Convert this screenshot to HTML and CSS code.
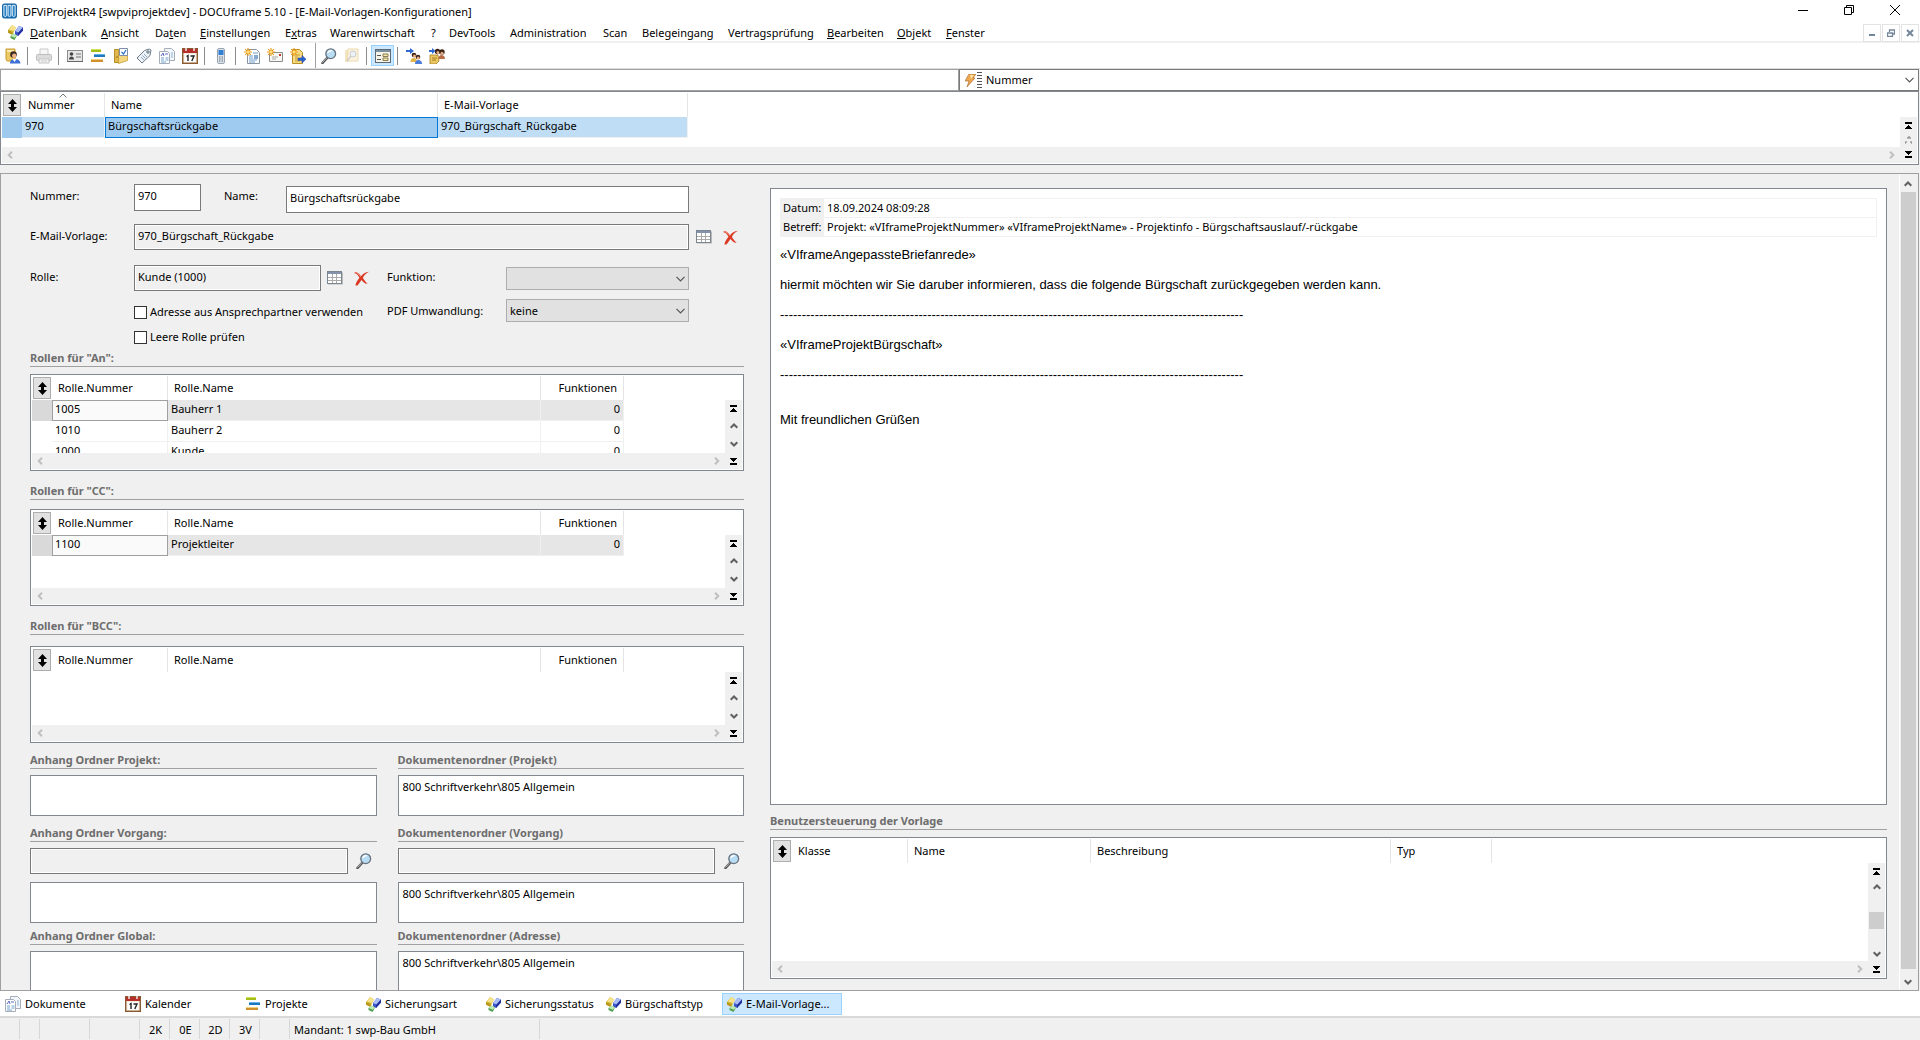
FILE: index.html
```html
<!DOCTYPE html>
<html lang="de">
<head>
<meta charset="utf-8">
<title>DFViProjektR4 - DOCUframe 5.10</title>
<link rel="stylesheet" href="styles.css">
</head>
<body>
<svg class="sprite" aria-hidden="true">
  <symbol id="i-app" viewBox="0 0 16 16"><rect x=".5" y=".5" width="15" height="15" rx="2" fill="#1b75bb" stroke="#0f5c9c"/><path d="M2 2h3v11l-1.500 1L2 13zM6.500 2h3v11L8 14l-1.500-1zM11 2h3v11l-1.500 1L11 13z" fill="#2b84c6" stroke="#fff" stroke-width=".9"/></symbol>
  <symbol id="i-cubes" viewBox="0 0 16 16"><path d="M5 1l4 2.500-3.500 7L1 8.500V6z" fill="#d9bd3a"/><path d="M5 1l4 2.500L7 7 2 5.500z" fill="#f6e48c"/><path d="M1 6l4.500 2v3L1 8.700z" fill="#b8971b"/><path d="M12 2l4 1.500v3l-5 5.500-3-1.500V7z" fill="#3c55c8"/><path d="M12 2l4 1.500-4.500 5L8 7z" fill="#a9bdf6"/><path d="M16 3.500v3L11 12V9z" fill="#22309c"/><path d="M6.500 9.500l3.500 2-2.500 4.500L3.500 14v-2z" fill="#4fa04d"/><path d="M6.500 9.500l3.500 2-2.300 2.300L3.500 12z" fill="#bfe8b4"/></symbol>
  <symbol id="i-login" viewBox="0 0 16 16"><path d="M1 1h9v12H2L1 11z" fill="#ecc963" stroke="#c79a2d"/><path d="M2 2h7v2H2z" fill="#fae9b0"/><circle cx="8.500" cy="6.500" r="3.300" fill="#3a2a22"/><ellipse cx="9.200" cy="7.800" rx="2.100" ry="2.400" fill="#efb48a"/><path d="M5 15.500c0-4 3-5 5.500-4.500 3 0 4.500 1.500 5 4.500z" fill="#3d6fd6"/><path d="M7.500 11l2 3 2-3z" fill="#fff"/></symbol>
  <symbol id="i-print" viewBox="0 0 16 16"><path d="M4 1h8v6H4z" fill="#f7f7f7" stroke="#c9c9c9"/><rect x=".5" y="6.500" width="15" height="6" rx="1" fill="#dcdcdc" stroke="#bcbcbc"/><path d="M3 11h10v4H3z" fill="#f4f4f4" stroke="#c4c4c4"/><path d="M5 13h6" stroke="#ccc"/></symbol>
  <symbol id="i-card" viewBox="0 0 16 16"><rect x=".5" y="2.500" width="15" height="11" fill="#e6e6e6" stroke="#8c8c8c"/><path d="M0 13.500h16" stroke="#666"/><circle cx="4.500" cy="6" r="1.800" fill="#444"/><path d="M2 11.500c0-4 5-4 5 0z" fill="#444"/><path d="M9 6h5M9 9h5" stroke="#777"/></symbol>
  <symbol id="i-bars" viewBox="0 0 16 16"><path d="M1 1h9l1 1v2H1z" fill="#a4bd17"/><path d="M1 1h9l1 1H1z" fill="#cfe05c"/><path d="M4 6h10l1 1v2H4z" fill="#1f78bd"/><path d="M4 6h10l1 1H4z" fill="#61b0e8"/><path d="M1 11h11l1 1v2H1z" fill="#cf8f2a"/><path d="M1 11h11l1 1H1z" fill="#f5d07c"/></symbol>
  <symbol id="i-folder" viewBox="0 0 16 16"><path d="M1.500 1.500h4v13h-4z" fill="#e2b94f" stroke="#b98b23"/><path d="M5.500 2.500h9v10l-9 3z" fill="#f3d67e" stroke="#c59a34" stroke-width=".8"/><path d="M6.500.5h8v7h-8z" fill="#f8fbff" stroke="#7d8ea6"/><path d="M8.500 4l2 2 2.500-4" fill="none" stroke="#2f6fc4" stroke-width="1.200"/><circle cx="4" cy="9" r=".8" fill="#8b671a"/></symbol>
  <symbol id="i-tag" viewBox="0 0 16 16"><path d="M8.500 2.500l5-1.500 1.500 1-1 5.500-8 7.500-5-5z" fill="#eef3f7" stroke="#6c7c8c"/><circle cx="12" cy="4" r="1.200" fill="#fff" stroke="#55646f"/><path d="M5 9l3 3M6.500 7.500l3 3M8 6l3 3" stroke="#8da6bb"/></symbol>
  <symbol id="i-docs" viewBox="0 0 16 16"><path d="M5.500.5h7l3 3v9h-10z" fill="#f3f6fa" stroke="#a5adb8"/><path d="M.5 3.500h8l2 2v10H.5z" fill="#fff" stroke="#a5adb8"/><path d="M2 8l2-3 1 3M6 6h3" fill="none" stroke="#5a68c4"/><path d="M2 10h3M6.500 10h3M2 12h3M6.500 12h3M2 14h5" stroke="#6aa0cf"/><path d="M12 5h2M12 7h2M12 9h2" stroke="#8db2d6"/></symbol>
  <symbol id="i-cal" viewBox="0 0 16 16"><rect x=".7" y=".7" width="14.600" height="14.600" fill="#f6ead8" stroke="#8a5b33" stroke-width="1.400"/><path d="M1 1h14v4H1z" fill="#b6302b"/><path d="M4 0v3M12 0v3" stroke="#eee" stroke-width="1.500"/><rect x="2.500" y="6" width="11" height="8" fill="#fff"/><path d="M4.500 8.500L6 7.500V13M8.500 8h3.500L9.800 13" fill="none" stroke="#222" stroke-width="1.400"/></symbol>
  <symbol id="i-phone" viewBox="0 0 16 16"><rect x="4.500" y=".5" width="7" height="15" rx="1.500" fill="#dde3e9" stroke="#98a4b1"/><rect x="5.500" y="2" width="5" height="5" fill="#2f7fd3"/><path d="M6 9h1m.500 0h1m.500 0h1M6 11h1m.500 0h1m.500 0h1M6 13h1m.500 0h1m.500 0h1" stroke="#6d7885"/></symbol>
  <symbol id="i-star" viewBox="0 0 8 8"><path d="M4 0v8M0 4h8M1.200 1.200l5.600 5.600M6.800 1.200L1.200 6.800" stroke="#e79a1c" stroke-width="1.100"/><circle cx="4" cy="4" r="1.500" fill="#ffe27a"/></symbol>
  <symbol id="i-newdoc" viewBox="0 0 16 16"><path d="M3.500 1.500h9l3 3v11h-12z" fill="#fff" stroke="#8a93a0"/><path d="M9 5h5M5 8h4M5 10h4M5 12h8M5 14h6" stroke="#6c9cc9"/><rect x="10" y="7" width="4" height="4" fill="#86a9d2"/><use href="#i-star" width="8" height="8"/></symbol>
  <symbol id="i-newmail" viewBox="0 0 16 16"><path d="M2.500 4.500h13v9h-13z" fill="#f7f7f4" stroke="#8b8b8b"/><path d="M5 9h6M5 11h4" stroke="#a7a7a7"/><rect x="12" y="6" width="2" height="2" fill="#c8332c"/><use href="#i-star" width="8" height="8"/></symbol>
  <symbol id="i-newimport" viewBox="0 0 16 16"><path d="M2.500 1.500h7l3 3v11h-10z" fill="#f7dc86" stroke="#bb8e25"/><path d="M5 7h5M5 9h3M5 11h3M5 13h5" stroke="#c59a34"/><path d="M8 10h4V7.500l4 3.700-4 3.800v-2.500H8z" fill="#2b62cf" stroke="#163f96" stroke-width=".5"/><use href="#i-star" width="8" height="8"/></symbol>
  <symbol id="i-search" viewBox="0 0 16 16"><path d="M6.500 9.500L1.500 15" stroke="#555" stroke-width="2.600" stroke-linecap="round"/><path d="M6 9.500L1.500 14.500" stroke="#c5c5c5" stroke-width=".9"/><circle cx="9.700" cy="5.700" r="4.900" fill="#b9dcf5" stroke="#66727e" stroke-width="1.300"/><path d="M6.800 5a3.200 3.200 0 0 1 4-2.200" fill="none" stroke="#fff" stroke-width="1.500"/></symbol>
  <symbol id="i-find" viewBox="0 0 16 16"><path d="M1 2h4v12H1z" fill="#f5e6c2"/><path d="M4 1h10v12H3z" fill="#fbf3df" stroke="#ead9b0"/><circle cx="9" cy="6" r="3" fill="#eaf2f8" stroke="#ccc"/><path d="M7 8l-4 5" stroke="#ccc" stroke-width="1.500"/></symbol>
  <symbol id="i-form" viewBox="0 0 16 14"><rect x=".5" y=".5" width="15" height="13" fill="#f7f4ea" stroke="#5d6a76"/><path d="M1 1h14v2H1z" fill="#7c8fa1"/><path d="M2 6.500h4M2 10.500h4" stroke="#555"/><path d="M8 5h5v2.500H8zM8 9h5v2.500H8z" fill="#f4e9a8" stroke="#716238" stroke-width=".8"/></symbol>
  <symbol id="i-users" viewBox="0 0 16 16"><circle cx="8" cy="7" r="2.300" fill="#3b2416"/><circle cx="8.500" cy="8" r="1.500" fill="#eab088"/><path d="M4.500 14c0-3.500 2-4 3.500-4s3 1 3 4z" fill="#e1b647"/><circle cx="12" cy="9" r="2.300" fill="#3b2416"/><circle cx="12.200" cy="10" r="1.500" fill="#eab088"/><path d="M9 16c0-3 1.500-4 3.500-4s3.500 1 3.500 4z" fill="#4a7ddb"/><path d="M0 2h4V0l4 3-4 3V4H0z" fill="#2f6ad4"/></symbol>
  <symbol id="i-usersdoc" viewBox="0 0 16 16"><path d="M1 7h8l1 6-3 3H1z" fill="#e9c765" stroke="#a97d20" stroke-width=".8"/><path d="M3 10h5M3 12h4" stroke="#a97d20"/><circle cx="8.500" cy="3.500" r="2.700" fill="#3b2416"/><circle cx="9" cy="4.600" r="1.500" fill="#eab088"/><circle cx="13" cy="4" r="2.700" fill="#3b2416"/><circle cx="13" cy="5.200" r="1.500" fill="#eab088"/><path d="M9.500 11c0-3 1.500-4 3-4s3.500 1 3.500 4z" fill="#b86c48"/><path d="M0 2h3V0l3.500 3L3 6V4H0z" fill="#2f6ad4"/></symbol>
  <symbol id="i-flash" viewBox="0 0 11 13"><path d="M4 0h7L8 4h2L2 13l2-6H0z" fill="#f0a850" stroke="#a3662b" stroke-width=".6"/><path d="M5 1h4L6 5z" fill="#fde3a8"/></symbol>
  <symbol id="i-grid" viewBox="0 0 16 14"><rect x="1" y="1.500" width="15" height="12" fill="#b9b9b9"/><rect x=".5" y=".5" width="14" height="12" fill="#fff" stroke="#7a8790"/><path d="M1 1h13v2H1z" fill="#8493ab"/><path d="M1 6.500h13M1 9.500h13M5.500 3v9M9.500 3v9" stroke="#aaa"/></symbol>
  <symbol id="i-del" viewBox="0 0 16 16"><path d="M1 1c3 0 4.500 2 6.500 4.500C9.500 3 12 1 16 .8 12 3 10.500 5 9.500 7.500c1.500 2 2.500 4 5 6-3 .2-5-2-6.500-4C6.500 11.500 5 14 3.500 15.500H1.500C2 12 4 9.500 5.800 7.200 4.500 5 3 3 .5 2.500z" fill="#dc3a24"/><path d="M1.500 1.500c2.500.5 4 2.500 5.500 4.500" fill="none" stroke="#f29a88"/></symbol>
  <symbol id="i-sort" viewBox="0 0 9 13"><path d="M4.500 0L9 5H6v3h3l-4.500 5L0 8h3V5H0z" fill="#000"/></symbol>
  <symbol id="i-first" viewBox="0 0 7 7"><path d="M0 0h7v2H0zM3 3h1v1h1v1h1v1h1v1H0V6h1V5h1V4h1z" fill="#000"/></symbol>
  <symbol id="i-last" viewBox="0 0 7 7"><path d="M0 5h7v2H0zM0 0h7v1H6v1H5v1H4v1H3V3H2V2H1V1H0z" fill="#000"/></symbol>
  <symbol id="i-up" viewBox="0 0 8 6"><path d="M.7 4.800L4 1.500l3.300 3.300" fill="none" stroke="#606060" stroke-width="2"/></symbol>
  <symbol id="i-down" viewBox="0 0 8 6"><path d="M.7 1.200L4 4.500l3.300-3.300" fill="none" stroke="#606060" stroke-width="2"/></symbol>
  <symbol id="i-left" viewBox="0 0 6 8"><path d="M5 .7L1.700 4 5 7.300" fill="none" stroke="#bfbfbf" stroke-width="2"/></symbol>
  <symbol id="i-right" viewBox="0 0 6 8"><path d="M1 .7L4.300 4 1 7.300" fill="none" stroke="#bfbfbf" stroke-width="2"/></symbol>
  <symbol id="i-chev" viewBox="0 0 9 6"><path d="M.5 .8l4 4 4-4" fill="none" stroke="#555" stroke-width="1.200"/></symbol>
</svg>

<div class="app">
  <header class="titlebar">
    <svg class="ic"><use href="#i-app"/></svg>
    <h1 class="title">DFViProjektR4 [swpviprojektdev] - DOCUframe 5.10 - [E-Mail-Vorlagen-Konfigurationen]</h1>
    <div class="winbtns">
      <button class="winbtn" aria-label="Minimieren"><svg width="10" height="10"><path d="M0 5.500h10" stroke="#000"/></svg></button>
      <button class="winbtn" aria-label="Wiederherstellen"><svg width="10" height="10"><path d="M.5 2.500h7v7h-7zM2.500 2.500v-2h7v7h-2" fill="none" stroke="#000"/></svg></button>
      <button class="winbtn" aria-label="Schließen"><svg width="10" height="10"><path d="M0 0l10 10M10 0L0 10" stroke="#000"/></svg></button>
    </div>
  </header>

  <nav class="menubar">
    <svg class="ic"><use href="#i-cubes"/></svg>
    <div class="menu">
      <button class="mi w71"><u>D</u>atenbank</button><button class="mi w54"><u>A</u>nsicht</button><button class="mi w45">Da<u>t</u>en</button><button class="mi w85"><u>E</u>instellungen</button><button class="mi w45">E<u>x</u>tras</button><button class="mi w101">Warenwirtschaft</button><button class="mi w18">?</button><button class="mi w61">DevTools</button><button class="mi w93">Administration</button><button class="mi w39">Scan</button><button class="mi w86">Belegeingang</button><button class="mi w99">Vertragsprüfung</button><button class="mi w70"><u>B</u>earbeiten</button><button class="mi w49"><u>O</u>bjekt</button><button class="mi"><u>F</u>enster</button>
    </div>
    <div class="mdi">
      <button class="mdibtn" aria-label="Minimieren"><svg width="8" height="8"><path d="M1 6h6" stroke="#74869a" stroke-width="2"/></svg></button>
      <button class="mdibtn" aria-label="Wiederherstellen"><svg width="8" height="8"><path d="M.5 4h5v3.500h-5zM2.500 3V1h5v4H6" fill="none" stroke="#74869a" stroke-width="1.300"/></svg></button>
      <button class="mdibtn" aria-label="Schließen"><svg width="8" height="8"><path d="M1 1l6 6M7 1L1 7" stroke="#74869a" stroke-width="2"/></svg></button>
    </div>
  </nav>

  <div class="toolbar">
    <button class="tb" aria-label="Anmelden"><svg class="ic"><use href="#i-login"/></svg></button><i class="sep"></i>
    <button class="tb" aria-label="Drucken"><svg class="ic"><use href="#i-print"/></svg></button><i class="sep"></i>
    <button class="tb" aria-label="Adressen"><svg class="ic"><use href="#i-card"/></svg></button>
    <button class="tb" aria-label="Projekte"><svg class="ic"><use href="#i-bars"/></svg></button>
    <button class="tb" aria-label="Vorgänge"><svg class="ic"><use href="#i-folder"/></svg></button>
    <button class="tb" aria-label="Artikel"><svg class="ic"><use href="#i-tag"/></svg></button>
    <button class="tb" aria-label="Dokumente"><svg class="ic"><use href="#i-docs"/></svg></button>
    <button class="tb" aria-label="Kalender"><svg class="ic"><use href="#i-cal"/></svg></button><i class="sep"></i>
    <button class="tb" aria-label="Telefon"><svg class="ic"><use href="#i-phone"/></svg></button><i class="sep"></i>
    <button class="tb" aria-label="Neues Dokument"><svg class="ic"><use href="#i-newdoc"/></svg></button>
    <button class="tb" aria-label="Neue E-Mail"><svg class="ic"><use href="#i-newmail"/></svg></button>
    <button class="tb" aria-label="Import"><svg class="ic"><use href="#i-newimport"/></svg></button><i class="sep sep-full"></i>
    <button class="tb" aria-label="Suchen"><svg class="ic"><use href="#i-search"/></svg></button>
    <button class="tb" aria-label="Ordner durchsuchen"><svg class="ic"><use href="#i-find"/></svg></button><i class="sep"></i>
    <button class="tb tb-on" aria-label="Formularansicht"><svg class="gridic"><use href="#i-form"/></svg></button><i class="sep"></i>
    <button class="tb" aria-label="Benutzer zuweisen"><svg class="ic"><use href="#i-users"/></svg></button>
    <button class="tb" aria-label="Gruppen zuweisen"><svg class="ic"><use href="#i-usersdoc"/></svg></button>
  </div>

  <div class="searchrow">
    <input class="search" type="text" aria-label="Suchbegriff">
    <div class="field-pick">
      <svg class="flash"><use href="#i-flash"/></svg><i class="grip"></i>
      <select class="pick" aria-label="Suchfeld"><option>Nummer</option></select>
      <svg class="chev"><use href="#i-chev"/></svg>
    </div>
  </div>

  <section class="list list-main">
    <div class="list-view">
      <table class="tbl tbl-main">
        <colgroup><col class="c-head"><col class="c-mnr"><col class="c-mname"><col class="c-mvorl"></colgroup>
        <thead><tr><th><button class="sortbtn" aria-label="Sortieren"><svg class="sort"><use href="#i-sort"/></svg></button></th><th class="sorted">Nummer<svg class="caret" viewBox="0 0 8 5"><path d="M.5 4.500L4 1l3.500 3.500" fill="none" stroke="#777"/></svg></th><th>Name</th><th>E-Mail-Vorlage</th></tr></thead>
        <tbody><tr class="sel-blue"><td></td><td>970</td><td class="cell-on">Bürgschaftsrückgabe</td><td>970_Bürgschaft_Rückgabe</td></tr></tbody>
      </table>
    </div>
    <div class="vs"><svg class="s7"><use href="#i-first"/></svg><svg class="dots" viewBox="0 0 7 9"><path d="M3 1h2M2 2h4M0 6h2M5 6h2M0 7h1M6 7h1" stroke="#777"/></svg><svg class="s7"><use href="#i-last"/></svg></div>
    <div class="hs"><svg class="sh"><use href="#i-left"/></svg><svg class="sh"><use href="#i-right"/></svg></div>
  </section>

  <main class="form">
    <div class="content">
      <div class="left">
        <div class="fields">
          <div class="row">
            <label class="lbl w104" for="nr">Nummer:</label><input class="inp w67" id="nr" value="970">
            <label class="lbl w62 ml23" for="name">Name:</label><input class="inp grow low" id="name" value="Bürgschaftsrückgabe">
          </div>
          <div class="row">
            <label class="lbl w104" for="vorl">E-Mail-Vorlage:</label><input class="inp ro grow" id="vorl" value="970_Bürgschaft_Rückgabe" readonly>
          </div>
          <div class="row">
            <label class="lbl w104" for="rolle">Rolle:</label><input class="inp ro w187" id="rolle" value="Kunde (1000)" readonly>
            <button class="act" aria-label="Rolle auswählen"><svg class="gridic"><use href="#i-grid"/></svg></button>
            <button class="act" aria-label="Rolle entfernen"><svg class="del"><use href="#i-del"/></svg></button>
            <label class="lbl w119 push" for="fkt">Funktion:</label>
            <span class="combo low"><select class="sel" id="fkt"><option></option></select><svg class="chev"><use href="#i-chev"/></svg></span>
          </div>
          <div class="row">
            <div class="checks">
              <label class="check"><input type="checkbox" class="cb">Adresse aus Ansprechpartner verwenden</label>
              <label class="check"><input type="checkbox" class="cb">Leere Rolle prüfen</label>
            </div>
            <label class="lbl w119 push" for="pdf">PDF Umwandlung:</label>
            <span class="combo"><select class="sel" id="pdf"><option>keine</option></select><svg class="chev"><use href="#i-chev"/></svg></span>
          </div>
          <div class="side">
            <button class="act" aria-label="Vorlage auswählen"><svg class="gridic"><use href="#i-grid"/></svg></button>
            <button class="act" aria-label="Vorlage entfernen"><svg class="del"><use href="#i-del"/></svg></button>
          </div>
        </div>

        <h2 class="hd">Rollen für "An":</h2>
        <div class="list list-role">
          <div class="list-view"><table class="tbl tbl-role">
            <colgroup><col class="c-head"><col class="c-rnr"><col class="c-rname"><col class="c-rfkt"></colgroup>
            <thead><tr><th><button class="sortbtn" aria-label="Sortieren"><svg class="sort"><use href="#i-sort"/></svg></button></th><th>Rolle.Nummer</th><th>Rolle.Name</th><th class="num">Funktionen</th></tr></thead>
            <tbody><tr class="sel-grey"><td></td><td class="cell-on">1005</td><td>Bauherr 1</td><td class="num">0</td></tr>
            <tr><td></td><td>1010</td><td>Bauherr 2</td><td class="num">0</td></tr>
            <tr><td></td><td>1000</td><td>Kunde</td><td class="num">0</td></tr></tbody>
          </table></div>
          <div class="vs"><svg class="s7"><use href="#i-first"/></svg><svg class="sv"><use href="#i-up"/></svg><svg class="sv"><use href="#i-down"/></svg><svg class="s7"><use href="#i-last"/></svg></div>
          <div class="hs"><svg class="sh"><use href="#i-left"/></svg><svg class="sh"><use href="#i-right"/></svg></div>
        </div>

        <h2 class="hd gap-l">Rollen für "CC":</h2>
        <div class="list list-role">
          <div class="list-view"><table class="tbl tbl-role">
            <colgroup><col class="c-head"><col class="c-rnr"><col class="c-rname"><col class="c-rfkt"></colgroup>
            <thead><tr><th><button class="sortbtn" aria-label="Sortieren"><svg class="sort"><use href="#i-sort"/></svg></button></th><th>Rolle.Nummer</th><th>Rolle.Name</th><th class="num">Funktionen</th></tr></thead>
            <tbody><tr class="sel-grey"><td></td><td class="cell-on">1100</td><td>Projektleiter</td><td class="num">0</td></tr></tbody>
          </table></div>
          <div class="vs"><svg class="s7"><use href="#i-first"/></svg><svg class="sv"><use href="#i-up"/></svg><svg class="sv"><use href="#i-down"/></svg><svg class="s7"><use href="#i-last"/></svg></div>
          <div class="hs"><svg class="sh"><use href="#i-left"/></svg><svg class="sh"><use href="#i-right"/></svg></div>
        </div>

        <h2 class="hd gap-l">Rollen für "BCC":</h2>
        <div class="list list-role list-bcc">
          <div class="list-view"><table class="tbl tbl-role">
            <colgroup><col class="c-head"><col class="c-rnr"><col class="c-rname"><col class="c-rfkt"></colgroup>
            <thead><tr><th><button class="sortbtn" aria-label="Sortieren"><svg class="sort"><use href="#i-sort"/></svg></button></th><th>Rolle.Nummer</th><th>Rolle.Name</th><th class="num">Funktionen</th></tr></thead>
          </table></div>
          <div class="vs"><svg class="s7"><use href="#i-first"/></svg><svg class="sv"><use href="#i-up"/></svg><svg class="sv"><use href="#i-down"/></svg><svg class="s7"><use href="#i-last"/></svg></div>
          <div class="hs"><svg class="sh"><use href="#i-left"/></svg><svg class="sh"><use href="#i-right"/></svg></div>
        </div>

        <div class="folders">
          <section class="folder">
            <h2 class="hd"><label for="a1">Anhang Ordner Projekt:</label></h2>
            <textarea class="area" id="a1"></textarea>
            <h2 class="hd"><label for="a2">Anhang Ordner Vorgang:</label></h2>
            <div class="lookup"><input class="inp ro grow" id="a2" readonly><button class="act" aria-label="Ordner suchen"><svg class="ic"><use href="#i-search"/></svg></button></div>
            <textarea class="area" aria-label="Anhang Ordner Vorgang"></textarea>
            <h2 class="hd tight"><label for="a3">Anhang Ordner Global:</label></h2>
            <textarea class="area" id="a3"></textarea>
          </section>
          <section class="folder">
            <h2 class="hd"><label for="d1">Dokumentenordner (Projekt)</label></h2>
            <textarea class="area" id="d1">800 Schriftverkehr\805 Allgemein</textarea>
            <h2 class="hd"><label for="d2">Dokumentenordner (Vorgang)</label></h2>
            <div class="lookup"><input class="inp ro grow" id="d2" readonly><button class="act" aria-label="Ordner suchen"><svg class="ic"><use href="#i-search"/></svg></button></div>
            <textarea class="area" aria-label="Dokumentenordner Vorgang">800 Schriftverkehr\805 Allgemein</textarea>
            <h2 class="hd tight"><label for="d3">Dokumentenordner (Adresse)</label></h2>
            <textarea class="area" id="d3">800 Schriftverkehr\805 Allgemein</textarea>
          </section>
        </div>
      </div>

      <div class="right">
        <article class="preview">
          <table class="mailhead">
            <tr><th>Datum:</th><td>18.09.2024 08:09:28</td></tr>
            <tr><th>Betreff:</th><td>Projekt: «VIframeProjektNummer» «VIframeProjektName» - Projektinfo - Bürgschaftsauslauf/-rückgabe</td></tr>
          </table>
          <p>«VIframeAngepassteBriefanrede»</p>
          <p>hiermit möchten wir Sie daruber informieren, dass die folgende Bürgschaft zurückgegeben werden kann.</p>
          <p>-----------------------------------------------------------------------------------------------------------</p>
          <p>«VIframeProjektBürgschaft»</p>
          <p>-----------------------------------------------------------------------------------------------------------</p>
          <p><br>Mit freundlichen Grüßen</p>
        </article>
        <h2 class="hd">Benutzersteuerung der Vorlage</h2>
        <div class="list list-user">
          <div class="list-view"><table class="tbl tbl-user">
            <colgroup><col class="c-head"><col class="c-ukl"><col class="c-uname"><col class="c-ubes"><col class="c-utyp"></colgroup>
            <thead><tr><th><button class="sortbtn" aria-label="Sortieren"><svg class="sort"><use href="#i-sort"/></svg></button></th><th>Klasse</th><th>Name</th><th>Beschreibung</th><th>Typ</th></tr></thead>
          </table></div>
          <div class="vs"><svg class="s7"><use href="#i-first"/></svg><svg class="sv"><use href="#i-up"/></svg><i class="thumb"></i><svg class="sv"><use href="#i-down"/></svg><svg class="s7"><use href="#i-last"/></svg></div>
          <div class="hs"><svg class="sh"><use href="#i-left"/></svg><svg class="sh"><use href="#i-right"/></svg></div>
        </div>
      </div>
    </div>
    <div class="pagescroll"><svg class="sv"><use href="#i-up"/></svg><i class="thumb"></i><svg class="sv"><use href="#i-down"/></svg></div>
  </main>

  <nav class="tabs">
    <button class="tab"><svg class="ic"><use href="#i-docs"/></svg>Dokumente</button>
    <button class="tab"><svg class="ic"><use href="#i-cal"/></svg>Kalender</button>
    <button class="tab"><svg class="ic"><use href="#i-bars"/></svg>Projekte</button>
    <button class="tab"><svg class="ic"><use href="#i-cubes"/></svg>Sicherungsart</button>
    <button class="tab"><svg class="ic"><use href="#i-cubes"/></svg>Sicherungsstatus</button>
    <button class="tab"><svg class="ic"><use href="#i-cubes"/></svg>Bürgschaftstyp</button>
    <button class="tab tab-on"><svg class="ic"><use href="#i-cubes"/></svg>E-Mail-Vorlage...</button>
  </nav>

  <footer class="status">
    <span class="st st20"></span><span class="st st20"></span><span class="st st50"></span><span class="st st50"></span><span class="st st30">2K</span><span class="st st30">0E</span><span class="st st30">2D</span><span class="st st30">3V</span><span class="st st30"></span><span class="st st250">Mandant: 1 swp-Bau GmbH</span>
  </footer>
</div>
</body>
</html>
```
FILE: styles.css
```css
* { box-sizing: border-box; }
html, body { margin: 0; height: 100%; }
body {
  font: 11px/16px "Noto Sans", "Open Sans", sans-serif;
  color: #000;
  background: #f0f0f0;
  overflow: hidden;
}
button, input, select, textarea { font: inherit; color: inherit; margin: 0; border-radius: 0; outline: none; }
button { padding: 0; border: 0; background: none; }
svg { display: block; flex: none; }
.sprite { position: absolute; width: 0; height: 0; }
.ic { width: 16px; height: 16px; }

.app { display: flex; flex-direction: column; height: 100vh; }

/* title bar */
.titlebar { display: flex; height: 24px; background: #fff; padding-left: 2px; align-items: center; }
.titlebar .ic { align-self: flex-start; width: 15px; height: 16px; margin-top: 3px; }
.title { flex: 1; margin: 0 0 0 6px; font-size: 11px; font-weight: 400; }
.winbtns { display: flex; align-self: flex-start; padding-right: 2px; }
.winbtn { display: grid; place-items: center; width: 46px; height: 20px; }

/* menu bar */
.menubar { display: flex; height: 19px; background: #fff; padding: 0 1px 0 7px; border-bottom: 2px solid #f0f0f0; }
.menu { display: flex; flex: 1; padding-left: 7px; }
.mi { text-align: left; }
.w18 { width: 18px; } .w39 { width: 39px; } .w45 { width: 45px; } .w49 { width: 49px; }
.w54 { width: 54px; } .w61 { width: 61px; } .w70 { width: 70px; } .w71 { width: 71px; }
.w85 { width: 85px; } .w86 { width: 86px; } .w93 { width: 93px; } .w99 { width: 99px; } .w101 { width: 101px; }
.mdi { display: flex; gap: 1px; }
.mdibtn { display: grid; place-items: center; width: 18px; height: 18px; border: 1px solid #e3e3e3; }

/* toolbar */
.toolbar { display: flex; align-items: center; height: 26px; background: #fff; padding-left: 1px; border-bottom: 1px solid #dcdcdc; }
.tb { display: grid; place-items: center; width: 23px; height: 21px; }
.tb-on { background: #cce8ff; border: 1px solid #99d1ff; }
.sep { width: 1px; height: 18px; margin: 0 4px 0 3px; background: #8c8c8c; }
.sep-full { height: 25px; background: #a0a0a0; margin: 0 1px 0 6px; }

/* search row */
.searchrow { display: flex; height: 22px; padding-right: 1px; }
.search { flex: 1; border: 1px solid #a0a0a0; background: #fff; padding: 0 4px; }
.field-pick { display: flex; flex: 1; align-items: center; border: 1px solid #7a7a7a; background: #fff; padding: 0 4px 0 5px; }
.flash { width: 11px; height: 13px; }
.grip { width: 5px; height: 16px; margin-left: 1px; background: repeating-linear-gradient(#555 0 1px, #fff 1px 3px); }
.pick { flex: 1; appearance: none; border: 0; background: none; padding: 0 4px; }
.chev { width: 9px; height: 6px; }

/* grids */
.list {
  display: grid;
  grid-template: 24px 1fr 16px / minmax(0, 1fr) 17px;
  background: #fff;
  border: 1px solid #828790;
  padding: 1px;
}
.list-view { grid-area: 1 / 1 / 3 / 3; overflow: hidden; }
.tbl { table-layout: fixed; border-collapse: separate; border-spacing: 0; }
.tbl th, .tbl td { padding: 0 3px; text-align: left; font-weight: 400; overflow: hidden; white-space: nowrap; }
.tbl th { height: 24px; padding: 0 6px; border-right: 1px solid #e5e5e5; }
.tbl th:first-child { padding: 0 1px; border-right: 0; }
.tbl td { height: 21px; line-height: 18px; vertical-align: top; border-right: 1px solid #f0f0f0; border-bottom: 1px solid #f0f0f0; }
.tbl td:first-child { border-color: transparent; }
.tbl .num { text-align: right; }
.sortbtn { display: grid; place-items: center; width: 18px; height: 22px; background: #e1e1e1; border: 1px solid #adadad; }
.sort { width: 9px; height: 13px; }
.tbl .sel-grey td { background: #e6e6e6; }
.tbl .sel-grey td:first-child { background: #d9d9d9; border: 0; }
.tbl .sel-grey .cell-on { background: #fafafa; border: 1px solid #a0a0a0; padding-left: 2px; line-height: 16px; }
.tbl .sel-blue td { background: #bfddf5; }
.tbl .sel-blue td:first-child { background: #9fcaee; border: 0; }
.tbl .sel-blue .cell-on { background: #9fcbf0; border: 1px solid #0078d7; padding-left: 2px; line-height: 16px; }
.sorted { position: relative; }
.caret { position: absolute; left: 37px; top: 0; width: 8px; height: 5px; }
.c-head { width: 20px; }
.tbl-main { width: 686px; }
.c-mnr { width: 83px; } .c-mname { width: 333px; } .c-mvorl { width: 250px; }
.tbl-role { width: 592px; }
.c-rnr { width: 116px; } .c-rname { width: 373px; } .c-rfkt { width: 83px; }
.tbl-user { width: 720px; }
.c-ukl { width: 116px; } .c-uname { width: 183px; } .c-ubes { width: 300px; } .c-utyp { width: 101px; }

.vs { grid-area: 2 / 2 / 4 / 3; display: flex; flex-direction: column; justify-content: space-between; align-items: center; padding: 5px 0 4px; background: #f0f0f0; }
.hs { grid-area: 3 / 1; display: flex; justify-content: space-between; align-items: center; padding: 0 5px; background: #f0f0f0; }
.s7 { width: 7px; height: 7px; }
.dots { width: 7px; height: 9px; }
.sv { width: 8px; height: 6px; }
.sh { width: 6px; height: 8px; }
.thumb { display: block; width: 15px; background: #cdcdcd; }

.list-main { height: 74px; margin-right: 1px; }
.list-main .vs { padding: 5px 0; }
.list-role { height: 97px; margin-top: 7px; }
.list-bcc { margin-top: 11px; }
.list-user { height: 142px; margin-top: 7px; }
.list-user .thumb { height: 17px; margin: 13px 0; }

/* form */
.form {
  flex: 1;
  min-height: 0;
  display: flex;
  margin: 8px 1px 0 0;
  border: 1px solid #a0a0a0;
  overflow: hidden;
}
.content { flex: 1; display: flex; gap: 26px; min-width: 0; padding: 10px 12px 0 29px; overflow: hidden; }
.left { flex: 0 0 713px; }
.right { flex: 1; min-width: 0; padding-top: 4px; }
.pagescroll { width: 19px; display: flex; flex-direction: column; align-items: center; padding: 7px 3px 5px 1px; border-left: 1px solid #fff; }
.pagescroll .thumb { flex: 1; margin: 5px 0 10px; }

.fields { display: grid; grid-template: 40px 41px 34px 50px / 659px 1fr; }
.row { grid-column: 1; display: flex; align-items: flex-start; }
.side { grid-area: 2 / 2; display: flex; padding-left: 1px; }
.lbl { padding-top: 4px; white-space: nowrap; }
.w62 { width: 62px; } .w67 { width: 67px; } .w104 { width: 104px; } .w119 { width: 119px; } .w187 { width: 187px; }
.ml23 { margin-left: 23px; }
.push { margin-left: auto; }
.grow { flex: 1; min-width: 0; }
.low { margin-top: 2px; }
.inp { height: 27px; border: 1px solid #7a7a7a; background: #fff; padding: 0 3px 4px; }
.ro { height: 26px; background: #f0f0f0; box-shadow: inset 0 0 0 1px #fff; }
.act { display: grid; place-items: center; width: 27px; height: 26px; }
.gridic { width: 16px; height: 14px; }
.del { width: 15px; height: 15px; }
.combo { position: relative; width: 183px; }
.sel { display: block; appearance: none; width: 100%; height: 23px; border: 1px solid #adadad; background: #e1e1e1; padding: 0 3px; }
.combo .chev { position: absolute; right: 4px; top: 9px; }
.checks { padding: 4px 0 0 104px; }
.check { display: flex; align-items: center; gap: 3px; height: 18px; margin-bottom: 7px; white-space: nowrap; }
.cb { appearance: none; width: 13px; height: 13px; border: 1px solid #333; background: #fff; }

.hd { margin: 0; height: 18px; line-height: 17px; font-size: 11px; font-weight: 700; color: #6d6d6d; border-bottom: 1px solid #a0a0a0; }
.gap-l { margin-top: 11px; }
.gap-l + .list-role { margin-top: 9px; }
.gap-l + .list-bcc { margin-top: 11px; }
.folders { display: grid; grid-template-columns: 1fr 1fr; gap: 21px; margin-top: 8px; }
.folder { display: flex; flex-direction: column; }
.area { flex: none; height: 41px; margin: 6px 0 8px; border: 1px solid #828790; background: #fff; padding: 3px 4px; resize: none; overflow: hidden; }
.lookup { display: flex; margin: 6px 0 2px; }
.lookup .act { width: 29px; padding-left: 4px; }
.tight { margin-top: -4px; }

/* mail preview */
.preview { height: 617px; background: #fff; border: 1px solid #828790; padding: 9px; font: 13px/15px "Liberation Sans", Arial, sans-serif; overflow: hidden; }
.preview p { margin: 0 0 15px; white-space: nowrap; }
.mailhead { width: 100%; border-spacing: 0; border: 1px solid #f0f0f0; border-left: 0; margin-bottom: 10px; font: 11px/18px "Noto Sans", "Open Sans", sans-serif; }
.mailhead th { width: 44px; padding: 0 0 0 3px; font-weight: 400; text-align: left; background: #f0f0f0; white-space: nowrap; }
.mailhead td { padding: 0 3px; }
.mailhead tr + tr td { border-top: 1px solid #f0f0f0; }
.right .hd { margin-top: 7px; }

/* open windows */
.tabs { display: flex; height: 27px; background: #fff; border-bottom: 2px solid #d9d9d9; padding: 2px 2px 1px; }
.tab { display: flex; align-items: center; gap: 4px; width: 120px; height: 22px; padding: 0 0 0 3px; white-space: nowrap; }
.tab-on { background: #cce8ff; border: 1px solid #99d1ff; }

/* status bar */
.status { display: flex; height: 22px; background: #f0f0f0; }
.st { height: 20px; margin-top: 1px; line-height: 22px; border-right: 1px solid #d7d7d7; padding-left: 4px; text-align: left; }
.st20 { width: 20px; } .st50 { width: 50px; } .st30 { width: 30px; padding: 0 0 0 2px; text-align: center; } .st250 { width: 250px; }
```
